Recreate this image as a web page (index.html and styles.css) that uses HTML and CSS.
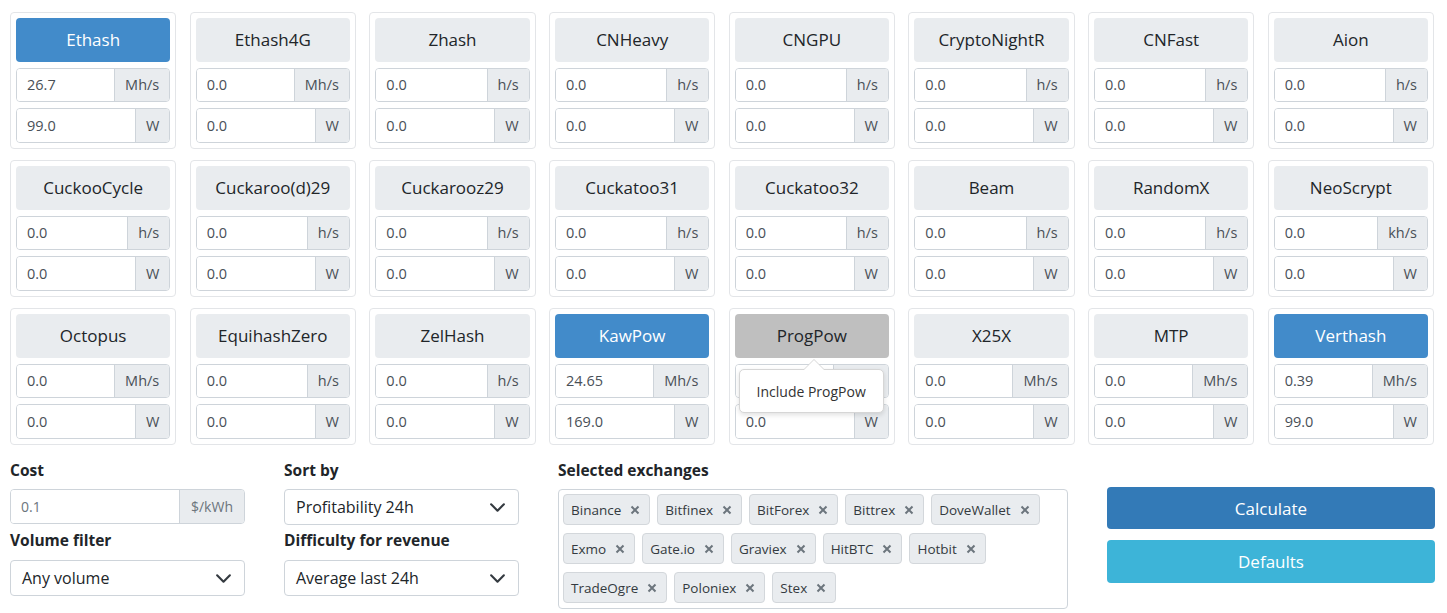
FILE: index.html
```html
<!DOCTYPE html>
<html lang="en">
<head>
<meta charset="utf-8">
<title>Mining calculator</title>
<link rel="stylesheet" href="styles.css">
</head>
<body>
<div class="algos">
  <div class="algo">
    <button class="algo-btn on">Ethash</button>
    <div class="ig"><input class="ig-input" value="26.7"><span class="ig-addon">Mh/s</span></div>
    <div class="ig"><input class="ig-input" value="99.0"><span class="ig-addon">W</span></div>
  </div>
  <div class="algo">
    <button class="algo-btn">Ethash4G</button>
    <div class="ig"><input class="ig-input" value="0.0"><span class="ig-addon">Mh/s</span></div>
    <div class="ig"><input class="ig-input" value="0.0"><span class="ig-addon">W</span></div>
  </div>
  <div class="algo">
    <button class="algo-btn">Zhash</button>
    <div class="ig"><input class="ig-input" value="0.0"><span class="ig-addon">h/s</span></div>
    <div class="ig"><input class="ig-input" value="0.0"><span class="ig-addon">W</span></div>
  </div>
  <div class="algo">
    <button class="algo-btn">CNHeavy</button>
    <div class="ig"><input class="ig-input" value="0.0"><span class="ig-addon">h/s</span></div>
    <div class="ig"><input class="ig-input" value="0.0"><span class="ig-addon">W</span></div>
  </div>
  <div class="algo">
    <button class="algo-btn">CNGPU</button>
    <div class="ig"><input class="ig-input" value="0.0"><span class="ig-addon">h/s</span></div>
    <div class="ig"><input class="ig-input" value="0.0"><span class="ig-addon">W</span></div>
  </div>
  <div class="algo">
    <button class="algo-btn">CryptoNightR</button>
    <div class="ig"><input class="ig-input" value="0.0"><span class="ig-addon">h/s</span></div>
    <div class="ig"><input class="ig-input" value="0.0"><span class="ig-addon">W</span></div>
  </div>
  <div class="algo">
    <button class="algo-btn">CNFast</button>
    <div class="ig"><input class="ig-input" value="0.0"><span class="ig-addon">h/s</span></div>
    <div class="ig"><input class="ig-input" value="0.0"><span class="ig-addon">W</span></div>
  </div>
  <div class="algo">
    <button class="algo-btn">Aion</button>
    <div class="ig"><input class="ig-input" value="0.0"><span class="ig-addon">h/s</span></div>
    <div class="ig"><input class="ig-input" value="0.0"><span class="ig-addon">W</span></div>
  </div>

  <div class="algo">
    <button class="algo-btn">CuckooCycle</button>
    <div class="ig"><input class="ig-input" value="0.0"><span class="ig-addon">h/s</span></div>
    <div class="ig"><input class="ig-input" value="0.0"><span class="ig-addon">W</span></div>
  </div>
  <div class="algo">
    <button class="algo-btn">Cuckaroo(d)29</button>
    <div class="ig"><input class="ig-input" value="0.0"><span class="ig-addon">h/s</span></div>
    <div class="ig"><input class="ig-input" value="0.0"><span class="ig-addon">W</span></div>
  </div>
  <div class="algo">
    <button class="algo-btn">Cuckarooz29</button>
    <div class="ig"><input class="ig-input" value="0.0"><span class="ig-addon">h/s</span></div>
    <div class="ig"><input class="ig-input" value="0.0"><span class="ig-addon">W</span></div>
  </div>
  <div class="algo">
    <button class="algo-btn">Cuckatoo31</button>
    <div class="ig"><input class="ig-input" value="0.0"><span class="ig-addon">h/s</span></div>
    <div class="ig"><input class="ig-input" value="0.0"><span class="ig-addon">W</span></div>
  </div>
  <div class="algo">
    <button class="algo-btn">Cuckatoo32</button>
    <div class="ig"><input class="ig-input" value="0.0"><span class="ig-addon">h/s</span></div>
    <div class="ig"><input class="ig-input" value="0.0"><span class="ig-addon">W</span></div>
  </div>
  <div class="algo">
    <button class="algo-btn">Beam</button>
    <div class="ig"><input class="ig-input" value="0.0"><span class="ig-addon">h/s</span></div>
    <div class="ig"><input class="ig-input" value="0.0"><span class="ig-addon">W</span></div>
  </div>
  <div class="algo">
    <button class="algo-btn">RandomX</button>
    <div class="ig"><input class="ig-input" value="0.0"><span class="ig-addon">h/s</span></div>
    <div class="ig"><input class="ig-input" value="0.0"><span class="ig-addon">W</span></div>
  </div>
  <div class="algo">
    <button class="algo-btn">NeoScrypt</button>
    <div class="ig"><input class="ig-input" value="0.0"><span class="ig-addon">kh/s</span></div>
    <div class="ig"><input class="ig-input" value="0.0"><span class="ig-addon">W</span></div>
  </div>

  <div class="algo">
    <button class="algo-btn">Octopus</button>
    <div class="ig"><input class="ig-input" value="0.0"><span class="ig-addon">Mh/s</span></div>
    <div class="ig"><input class="ig-input" value="0.0"><span class="ig-addon">W</span></div>
  </div>
  <div class="algo">
    <button class="algo-btn">EquihashZero</button>
    <div class="ig"><input class="ig-input" value="0.0"><span class="ig-addon">h/s</span></div>
    <div class="ig"><input class="ig-input" value="0.0"><span class="ig-addon">W</span></div>
  </div>
  <div class="algo">
    <button class="algo-btn">ZelHash</button>
    <div class="ig"><input class="ig-input" value="0.0"><span class="ig-addon">h/s</span></div>
    <div class="ig"><input class="ig-input" value="0.0"><span class="ig-addon">W</span></div>
  </div>
  <div class="algo">
    <button class="algo-btn on">KawPow</button>
    <div class="ig"><input class="ig-input" value="24.65"><span class="ig-addon">Mh/s</span></div>
    <div class="ig"><input class="ig-input" value="169.0"><span class="ig-addon">W</span></div>
  </div>
  <div class="algo">
    <button class="algo-btn hover">ProgPow</button>
    <div class="ig"><input class="ig-input" value="0.0"><span class="ig-addon">Mh/s</span></div>
    <div class="ig"><input class="ig-input" value="0.0"><span class="ig-addon">W</span></div>
    <div class="tooltip">Include ProgPow</div>
  </div>
  <div class="algo">
    <button class="algo-btn">X25X</button>
    <div class="ig"><input class="ig-input" value="0.0"><span class="ig-addon">Mh/s</span></div>
    <div class="ig"><input class="ig-input" value="0.0"><span class="ig-addon">W</span></div>
  </div>
  <div class="algo">
    <button class="algo-btn">MTP</button>
    <div class="ig"><input class="ig-input" value="0.0"><span class="ig-addon">Mh/s</span></div>
    <div class="ig"><input class="ig-input" value="0.0"><span class="ig-addon">W</span></div>
  </div>
  <div class="algo">
    <button class="algo-btn on">Verthash</button>
    <div class="ig"><input class="ig-input" value="0.39"><span class="ig-addon">Mh/s</span></div>
    <div class="ig"><input class="ig-input" value="99.0"><span class="ig-addon">W</span></div>
  </div>
</div>

<div class="settings">
  <div class="stack">
    <label class="lbl">Cost</label>
    <div class="ig ig-cost"><input class="ig-input" value="0.1"><span class="ig-addon">$/kWh</span></div>
    <label class="lbl lbl-next">Volume filter</label>
    <div class="select">
      <span>Any volume</span>
      <svg class="chev" viewBox="0 0 16 16" width="16" height="16"><path d="M2 5l6 6 6-6"/></svg>
    </div>
  </div>
  <div class="stack">
    <label class="lbl">Sort by</label>
    <div class="select">
      <span>Profitability 24h</span>
      <svg class="chev" viewBox="0 0 16 16" width="16" height="16"><path d="M2 5l6 6 6-6"/></svg>
    </div>
    <label class="lbl lbl-next2">Difficulty for revenue</label>
    <div class="select">
      <span>Average last 24h</span>
      <svg class="chev" viewBox="0 0 16 16" width="16" height="16"><path d="M2 5l6 6 6-6"/></svg>
    </div>
  </div>
  <div class="stack">
    <label class="lbl">Selected exchanges</label>
    <div class="tags">
      <span class="tag">Binance<svg class="x" viewBox="0 0 10 10"><path d="M1.5 1.5l7 7M8.5 1.5l-7 7"/></svg></span>
      <span class="tag">Bitfinex<svg class="x" viewBox="0 0 10 10"><path d="M1.5 1.5l7 7M8.5 1.5l-7 7"/></svg></span>
      <span class="tag">BitForex<svg class="x" viewBox="0 0 10 10"><path d="M1.5 1.5l7 7M8.5 1.5l-7 7"/></svg></span>
      <span class="tag">Bittrex<svg class="x" viewBox="0 0 10 10"><path d="M1.5 1.5l7 7M8.5 1.5l-7 7"/></svg></span>
      <span class="tag">DoveWallet<svg class="x" viewBox="0 0 10 10"><path d="M1.5 1.5l7 7M8.5 1.5l-7 7"/></svg></span>
      <span class="tag">Exmo<svg class="x" viewBox="0 0 10 10"><path d="M1.5 1.5l7 7M8.5 1.5l-7 7"/></svg></span>
      <span class="tag">Gate.io<svg class="x" viewBox="0 0 10 10"><path d="M1.5 1.5l7 7M8.5 1.5l-7 7"/></svg></span>
      <span class="tag">Graviex<svg class="x" viewBox="0 0 10 10"><path d="M1.5 1.5l7 7M8.5 1.5l-7 7"/></svg></span>
      <span class="tag">HitBTC<svg class="x" viewBox="0 0 10 10"><path d="M1.5 1.5l7 7M8.5 1.5l-7 7"/></svg></span>
      <span class="tag">Hotbit<svg class="x" viewBox="0 0 10 10"><path d="M1.5 1.5l7 7M8.5 1.5l-7 7"/></svg></span>
      <span class="tag">TradeOgre<svg class="x" viewBox="0 0 10 10"><path d="M1.5 1.5l7 7M8.5 1.5l-7 7"/></svg></span>
      <span class="tag">Poloniex<svg class="x" viewBox="0 0 10 10"><path d="M1.5 1.5l7 7M8.5 1.5l-7 7"/></svg></span>
      <span class="tag">Stex<svg class="x" viewBox="0 0 10 10"><path d="M1.5 1.5l7 7M8.5 1.5l-7 7"/></svg></span>
    </div>
  </div>
  <div class="actions">
    <button class="btn btn-calc">Calculate</button>
    <button class="btn btn-defaults">Defaults</button>
  </div>
</div>
</body>
</html>
```

FILE: styles.css
```css
* {
  box-sizing: border-box;
}

body {
  margin: 0;
  padding: 12px 13px 0 10px;
  font-family: "Open Sans", "Noto Sans", sans-serif;
  color: #212529;
  background: #fff;
}

/* algorithm cards */
.algos {
  display: grid;
  grid-template-columns: repeat(8, minmax(0, 1fr));
  column-gap: 13.4px;
  row-gap: 11px;
}

.algo {
  position: relative;
  display: flex;
  flex-direction: column;
  gap: 6px;
  padding: 5px;
  border: 1px solid #e3e5e8;
  border-radius: 4px;
  height: 137px;
  min-width: 0;
}

.algo-btn {
  height: 44px;
  border: none;
  border-radius: 4px;
  background: #e9ecef;
  color: #212529;
  font-family: inherit;
  font-size: 17px;
  padding: 0;
}

.algo-btn.on {
  background: #428bca;
  color: #fff;
}

.algo-btn.hover {
  background: #bfbfbf;
  color: #212529;
}

/* input with unit addon */
.ig {
  display: flex;
  height: 35px;
  border: 1px solid #ced4da;
  border-radius: 4px;
  overflow: hidden;
}

.ig-input {
  flex: 1;
  width: 0;
  min-width: 0;
  border: none;
  padding: 0 10px;
  font-family: inherit;
  font-size: 14.5px;
  color: #495057;
  outline: none;
}

.ig-addon {
  display: flex;
  align-items: center;
  padding: 0 10px;
  background: #e9ecef;
  border-left: 1px solid #ced4da;
  font-size: 14.5px;
  color: #495057;
}

/* tooltip over a card */
.tooltip {
  position: absolute;
  left: 9px;
  top: 60px;
  width: 145px;
  height: 44px;
  display: flex;
  align-items: center;
  justify-content: center;
  background: #fff;
  border: 1px solid #d6d6d6;
  border-radius: 5px;
  box-shadow: 0 2px 5px rgba(0, 0, 0, 0.12);
  font-size: 14px;
  color: #333;
}

.tooltip::before,
.tooltip::after {
  content: "";
  position: absolute;
  left: 63px;
  width: 0;
  height: 0;
  border-left: 11px solid transparent;
  border-right: 11px solid transparent;
}

.tooltip::before {
  top: -11px;
  border-bottom: 11px solid #d6d6d6;
}

.tooltip::after {
  top: -10px;
  border-bottom: 11px solid #fff;
}

/* settings row */
.settings {
  display: grid;
  grid-template-columns: 235px 235px 510px 328px;
  column-gap: 39px;
  margin-top: 13px;
}

.stack {
  display: flex;
  flex-direction: column;
}

.lbl {
  font-weight: 700;
  font-size: 15.5px;
  line-height: 24px;
  margin-bottom: 7px;
}

.lbl-next {
  margin-top: 4px;
  margin-bottom: 8px;
}

.lbl-next2 {
  margin-top: 3px;
  margin-bottom: 8px;
}

.ig-cost .ig-input {
  color: #6c757d;
  font-size: 14px;
}

.ig-cost .ig-addon {
  font-size: 14px;
  color: #6c757d;
  padding: 0 11px;
}

.select {
  display: flex;
  align-items: center;
  justify-content: space-between;
  height: 36px;
  padding: 0 12px 0 11px;
  border: 1px solid #ced4da;
  border-radius: 4px;
  font-size: 16px;
  color: #212529;
}

.chev {
  width: 17px;
  height: 17px;
  fill: none;
  stroke: #343a40;
  stroke-width: 2;
  stroke-linecap: round;
  stroke-linejoin: round;
}

/* exchange tag box */
.tags {
  display: flex;
  flex-wrap: wrap;
  align-content: flex-start;
  gap: 8px 7px;
  padding: 4px;
  border: 1px solid #ced4da;
  border-radius: 4px;
  height: 120px;
}

.tag {
  display: inline-flex;
  align-items: center;
  height: 31px;
  padding: 0 9px 0 7px;
  background: #e9ecef;
  border: 1px solid #d3d7db;
  border-radius: 4px;
  font-size: 13.5px;
  color: #343a40;
}

.x {
  width: 10px;
  height: 10px;
  margin-left: 9px;
  fill: none;
  stroke: #6c757d;
  stroke-width: 2;
}

/* action buttons */
.actions {
  display: flex;
  flex-direction: column;
  gap: 11px;
  padding-top: 29px;
}

.btn {
  border: none;
  border-radius: 4px;
  color: #fff;
  font-family: inherit;
  font-size: 17px;
}

.btn-calc {
  height: 42px;
  background: #337ab7;
}

.btn-defaults {
  height: 43px;
  background: #3db4d8;
}
```
